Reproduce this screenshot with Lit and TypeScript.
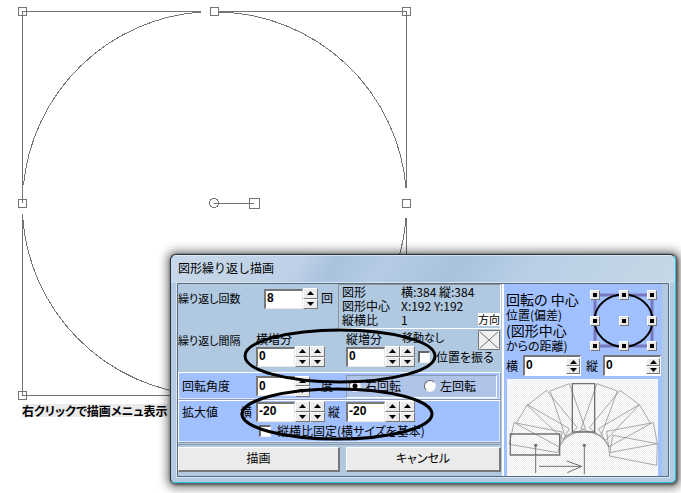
import { LitElement, html, css, svg } from "lit";
import { customElement, property } from "lit/decorators.js";

@customElement("spin-field")
class SpinField extends LitElement {
  @property() value = "0";
  @property() label = "";
  @property({ type: Number }) spinners = 2;
  @property({ type: Boolean, reflect: true }) inset = false;

  static styles = css`
    :host {
      display: inline-flex;
      align-items: center;
      height: 21px;
      flex: none;
    }
    :host([inset]) {
      display: flex;
      flex: 1;
      min-width: 0;
      box-sizing: border-box;
      background: #fff;
      border: 1px solid #fff;
      border-top: 2px solid #777;
      border-left: 2px solid #777;
    }
    .box {
      box-sizing: border-box;
      width: 39px;
      height: 20px;
      margin: 0;
      padding: 0 0 2px 1px;
      border: 1px solid #e8e8e8;
      border-top: 2px solid #777;
      border-left: 2px solid #777;
      border-radius: 0;
      background: #fff;
      color: #000;
      font: bold 12px "Liberation Sans", sans-serif;
      outline: none;
    }
    :host([inset]) .box {
      border: 0;
      height: 16px;
      flex: 1;
      width: 10px;
    }
    .spin {
      display: flex;
      flex-direction: column;
      width: 15px;
      height: 21px;
      flex: none;
    }
    :host([inset]) .spin {
      height: 16px;
      width: 14px;
    }
    .step {
      flex: 1;
      display: flex;
      align-items: center;
      justify-content: center;
      min-height: 0;
      margin: 0;
      padding: 0;
      border: 1px solid #fff;
      border-right-color: #777;
      border-bottom-color: #777;
      border-radius: 0;
      background: #ececec;
    }
    .tri {
      display: block;
      width: 7px;
      height: 4px;
    }
  `;

  render() {
    return html`
      <input class="box" type="text" .value=${this.value} aria-label=${this.label} />
      ${Array.from(
        { length: this.spinners },
        () => html`<span class="spin">
          <button class="step" aria-label="増やす">
            <svg class="tri" viewBox="0 0 7 4"><path d="M0 4L3.500 0L7 4Z" /></svg>
          </button>
          <button class="step" aria-label="減らす">
            <svg class="tri" viewBox="0 0 7 4"><path d="M0 0L3.500 4L7 0Z" /></svg>
          </button>
        </span>`
      )}
    `;
  }
}

const HANDLES = [
  [22, 11], [214, 11], [406, 11], [22, 203], [406, 203], [22, 395],
];

const FAN = [
  "42,172 187,200 174,262 28,237",
  "82,118 208,190 178,245 48,175",
  "140,75 232,187 190,222 82,120",
  "150,77 208,55 256,190 196,213",
  "291,55 352,77 303,212 243,190",
  "360,75 418,118 317,225 268,187",
  "418,118 452,175 326,245 296,190",
  "460,172 472,235 328,262 320,198",
  "338,210 472,235 470,300 328,272",
];

@customElement("app-root")
class AppRoot extends LitElement {
  static styles = css`
    :host {
      display: block;
      position: relative;
      min-height: 100vh;
      overflow: hidden;
      background: #fff;
      color: #000;
      font: 12px/14px "Noto Sans CJK JP", sans-serif;
      font-feature-settings: "palt";
    }
    .canvas {
      display: block;
    }
    .hint {
      position: absolute;
      left: 22px;
      top: 404px;
      background: #ebebeb;
      font-weight: bold;
      line-height: 13px;
      white-space: nowrap;
    }
    .dialog {
      position: absolute;
      left: 170px;
      right: 5px;
      top: 254px;
      box-sizing: border-box;
      border: 1px solid #28303c;
      border-right-color: #2cc4e4;
      border-bottom-color: #2cc4e4;
      border-radius: 6px 6px 5px 5px;
      padding: 0 6px 5px;
      background:
        linear-gradient(#ffffff80, #ffffff80) 0 0 / 100% 1px no-repeat,
        linear-gradient(125deg, #c9d9ea 0, #bed0e6 110px, #a9c2de 140px, #b6cce4 180px, #a8c2de 240px, #b8cfe5 300px, #c6d8e6 100%) 0 0 / 100% 28px no-repeat,
        #b4cae2;
      box-shadow: 1px 1px 3px 1px #00000080, 1px 1px 9px 5px #00000068;
    }
    .title {
      margin: 0;
      height: 28px;
      padding: 6px 0 0 1px;
      box-sizing: border-box;
      font-size: 12px;
      font-weight: normal;
      font-feature-settings: normal;
    }
    .client {
      display: grid;
      grid-template-columns: minmax(0, 1fr) 160px;
      border: 1px solid #5c6c7c;
      padding-right: 6px;
      background: #b0c8e0;
      box-shadow: 0 0 0 1px #d8e6f2;
    }
    .main {
      display: flex;
      flex-direction: column;
      padding-right: 1px;
    }
    .row {
      display: grid;
      grid-template-columns: 78px 90px minmax(0, 1fr);
    }
    .count {
      display: grid;
      grid-template-columns: 160px minmax(0, 1fr);
      height: 45px;
    }
    .count-set {
      display: flex;
      align-items: flex-start;
      padding-top: 4px;
      gap: 3px;
    }
    .count-set .cap {
      width: 83px;
      padding-top: 3px;
    }
    .count-set .unit {
      padding-top: 3px;
    }
    .small {
      font-size: 11px;
      white-space: nowrap;
    }
    .info {
      display: grid;
      grid-template-columns: 59px minmax(0, 1fr) 22px;
      grid-auto-rows: 14px;
      border: 1px solid #8d949c;
      border-right-color: #fff;
      border-bottom-color: #fff;
      padding: 0 0 0 3px;
      margin: 0;
    }
    .info dt, .info dd {
      margin: 0;
      white-space: nowrap;
    }
    .info dt {
      grid-column: 1;
    }
    .info dd {
      grid-column: 2;
    }
    .info .dir {
      grid-column: 3;
      grid-row: 3;
      background: #fff;
      height: 13px;
      line-height: 13px;
      text-align: center;
      font-size: 11px;
    }
    .spacing {
      height: 43px;
    }
    .spacing .cap {
      padding-top: 4px;
    }
    .stack {
      display: flex;
      flex-direction: column;
      padding-top: 3px;
    }
    .heads {
      display: flex;
      height: 14px;
    }
    .heads .move {
      margin-left: 20px;
      margin-top: -2px;
    }
    .cross {
      display: block;
      width: 22px;
      height: 20px;
      margin-left: auto;
      margin-top: -2px;
      margin-right: 1px;
      background: #f0f0f0;
    }
    .line {
      display: flex;
      align-items: center;
    }
    .check {
      display: flex;
      align-items: center;
      gap: 6px;
      white-space: nowrap;
    }
    .line .check {
      margin-left: 3px;
    }
    .tick {
      appearance: none;
      box-sizing: border-box;
      width: 12px;
      height: 12px;
      margin: 0;
      background: #fff;
      border: 1px solid #eee;
      border-top: 2px solid #666;
      border-left: 2px solid #666;
    }
    .group {
      background: #a0c0ff;
      border: 1px solid #8a98b0;
      border-top-color: #fff;
      border-left-color: #fff;
      box-shadow: inset -1px -1px #dce8ff;
    }
    .group .row {
      grid-template-columns: 77px 90px minmax(0, 1fr);
    }
    .angle {
      height: 26px;
      align-items: center;
    }
    .group .cap {
      display: flex;
      justify-content: space-between;
      padding: 0 4px 0 3px;
    }
    .pair {
      display: flex;
      align-items: center;
      justify-content: space-between;
      padding-right: 6px;
    }
    .pair.deg {
      padding-right: 13px;
    }
    .radios {
      display: flex;
      align-items: center;
      box-sizing: border-box;
      height: 23px;
      margin: 0 3px 0 0;
      padding: 0 0 0 2px;
      gap: 23px;
      border: 1px solid #8a98b0;
      border-right-color: #fff;
      border-bottom-color: #fff;
      background: #b0c4e8;
    }
    .radios .check {
      gap: 4px;
    }
    .dot {
      appearance: none;
      box-sizing: border-box;
      width: 12px;
      height: 12px;
      margin: 0;
      border-radius: 50%;
      border: 1px solid #666;
      border-right-color: #eee;
      border-bottom-color: #eee;
      background: #fff;
    }
    .dot:checked {
      background: radial-gradient(circle, #000 2px, #fff 3px);
    }
    .scale {
      padding-bottom: 2px;
    }
    .scale .row {
      height: 21px;
      align-items: center;
    }
    .scale .check {
      margin-left: 80px;
      height: 18px;
    }
    .actions {
      display: grid;
      grid-template-columns: 162px minmax(0, 1fr);
      gap: 6px;
      margin-top: 1px;
      border-top: 1px solid #8a98a8;
      padding: 2px 0 4px;
    }
    .push {
      height: 25px;
      margin: 0;
      padding: 0 0 2px;
      border: 1px solid #fff;
      border-right: 2px solid #777;
      border-bottom: 2px solid #777;
      border-radius: 0;
      background: #ebebeb;
      color: #000;
      font: inherit;
    }
    .side {
      display: flex;
      flex-direction: column;
      justify-content: space-between;
      border-left: 2px solid #fff;
      background: #a0c0ff;
    }
    .center {
      display: flex;
      justify-content: space-between;
      padding: 6px 5px 0 2px;
    }
    .about {
      margin: 0;
      white-space: nowrap;
    }
    .about span {
      display: block;
      line-height: 13px;
    }
    .about .big {
      font-size: 14px;
      line-height: 18px;
    }
    .picker {
      position: relative;
      display: grid;
      grid-template-columns: repeat(3, 10px);
      grid-template-rows: repeat(3, 10px);
      justify-content: space-between;
      align-content: space-between;
      width: 67px;
      height: 61px;
    }
    .ring {
      position: absolute;
      inset: 0;
      width: 100%;
      height: 100%;
    }
    .pick {
      position: relative;
      display: grid;
      place-items: center;
      margin: 0;
      padding: 0;
      border: 1px solid #fff;
      border-right-color: #777;
      border-bottom-color: #777;
      border-radius: 0;
      background: #e8e8e8;
    }
    .pick::after {
      content: "";
      width: 4px;
      height: 4px;
      background: #000;
    }
    .offsets {
      display: flex;
      align-items: center;
      gap: 5px;
      padding: 0 1px 0 2px;
    }
    .diagram {
      display: block;
      margin: 0 4px 0 3px;
      background: repeating-conic-gradient(#ececec 0 25%, #fff 0 50%) 0 0 / 2px 2px;
    }
    .notes {
      position: absolute;
      left: 66px;
      top: 72px;
      pointer-events: none;
    }
  `;

  render() {
    return html`
      <svg class="canvas" width="420" height="420" viewBox="0 0 420 420" fill="none" stroke="#747474" shape-rendering="crispEdges">
        <path d="M26 11.500H201M218 11.500H402M22.500 15V203M22.500 214V391M26 395.500H402M406.500 15V188M406.500 218V391" />
        <path d="M23.500 185A192 192 0 0 1 201 12M218 12A192 192 0 0 1 406 188M22.500 214A192 192 0 0 0 201 395M218 395A192 192 0 0 0 406 218" />
        ${HANDLES.map(([x, y]) => svg`<rect x=${x - 3.5} y=${y - 3.5} width="8" height="8" fill="#fff" />`)}
        <path d="M22.500 15V11.500H26M402 11.500H406.500V15M22.500 199V203M22.500 391V395.500H26" />
        <circle cx="214" cy="203" r="4.500" />
        <path d="M214 203.500H250" />
        <rect x="249.500" y="198.500" width="10" height="10" fill="#fff" />
        <path d="M250 203.500H254" />
      </svg>
      <span class="hint">右クリックで描画メニュ表示</span>

      <section class="dialog" role="dialog" aria-labelledby="title">
        <h1 class="title" id="title">図形繰り返し描画</h1>
        <div class="client">
          <div class="main">
            <div class="count">
              <div class="count-set">
                <span class="cap small">繰り返し回数</span>
                <spin-field value="8" label="繰り返し回数" spinners="1"></spin-field>
                <span class="unit">回</span>
              </div>
              <dl class="info">
                <dt>図形</dt><dd>横:384 縦:384</dd>
                <dt>図形中心</dt><dd>X:192 Y:192</dd>
                <dt>縦横比</dt><dd>1</dd>
                <dd class="dir">方向</dd>
              </dl>
            </div>

            <div class="row spacing">
              <span class="cap small">繰り返し間隔</span>
              <div class="stack">
                <div class="heads">横増分</div>
                <spin-field value="0" label="横増分"></spin-field>
              </div>
              <div class="stack">
                <div class="heads">
                  <span>縦増分</span>
                  <span class="move small">移動なし</span>
                  <svg class="cross" viewBox="0 0 22 20" fill="none" stroke="#777">
                    <path d="M.5 .5H21.500V19.500H.5ZM2 2L20 18M20 2L2 18" />
                  </svg>
                </div>
                <div class="line">
                  <spin-field value="0" label="縦増分"></spin-field>
                  <label class="check"><input class="tick" type="checkbox" />位置を振る</label>
                </div>
              </div>
            </div>

            <div class="group">
              <div class="row angle">
                <span class="cap">回転角度</span>
                <div class="pair deg">
                  <spin-field value="0" label="回転角度" spinners="1"></spin-field>
                  <span>度</span>
                </div>
                <div class="radios" role="radiogroup" aria-label="回転方向">
                  <label class="check"><input class="dot" type="radio" name="turn" checked />右回転</label>
                  <label class="check"><input class="dot" type="radio" name="turn" />左回転</label>
                </div>
              </div>
            </div>
            <div class="group scale">
              <div class="row">
                <span class="cap"><span>拡大値</span><span>横</span></span>
                <div class="pair">
                  <spin-field value="-20" label="拡大値 横"></spin-field>
                  <span>縦</span>
                </div>
                <spin-field value="-20" label="拡大値 縦"></spin-field>
              </div>
              <label class="check"><input class="tick" type="checkbox" />縦横比固定(横サイズを基本)</label>
            </div>

            <div class="actions">
              <button class="push">描画</button>
              <button class="push">キャンセル</button>
            </div>
          </div>

          <aside class="side">
            <div class="center">
              <p class="about">
                <span class="big">回転の 中心</span>
                <span>位置(偏差)</span>
                <span class="big">(図形中心</span>
                <span>からの距離)</span>
              </p>
              <div class="picker">
                <svg class="ring" viewBox="0 0 67 61" fill="none">
                  <rect x="5" y="5" width="57" height="51" stroke="#7878c0" stroke-width="3" />
                  <ellipse cx="33.500" cy="30.500" rx="29" ry="26" stroke="#000" stroke-width="2" />
                </svg>
                ${Array.from({ length: 9 }, (_, i) => html`<button class="pick" aria-label=${`基準点 ${i + 1}`}></button>`)}
              </div>
            </div>
            <div class="offsets">
              <span>横</span><spin-field inset value="0" label="横" spinners="1"></spin-field>
              <span>縦</span><spin-field inset value="0" label="縦" spinners="1"></spin-field>
            </div>
            <svg class="diagram" viewBox="21 41 453 291" fill="none" stroke="#808080" stroke-width="2">
              ${FAN.map((p) => svg`<polygon points=${p} />`)}
              <path d="M180 240C195 215 220 200 250 198S310 212 328 245" />
              <path d="M31 206H179V269H31ZM217 55H284V200H217Z" stroke="#707070" stroke-width="4" />
              <path d="M107 240V323M253 240V327M117 303H245M200 287L245 303L202 322" stroke="#707070" stroke-width="3" />
              <circle cx="107" cy="240" r="5" fill="#707070" stroke="none" />
              <circle cx="253" cy="240" r="5" fill="#707070" stroke="none" />
            </svg>
          </aside>
        </div>

        <svg class="notes" width="204" height="120" viewBox="237 327 204 120" fill="none" stroke="#000" stroke-width="3" aria-hidden="true">
          <ellipse cx="340" cy="356" rx="95" ry="26" />
          <ellipse cx="337" cy="414" rx="95" ry="25" />
        </svg>
      </section>
    `;
  }
}
